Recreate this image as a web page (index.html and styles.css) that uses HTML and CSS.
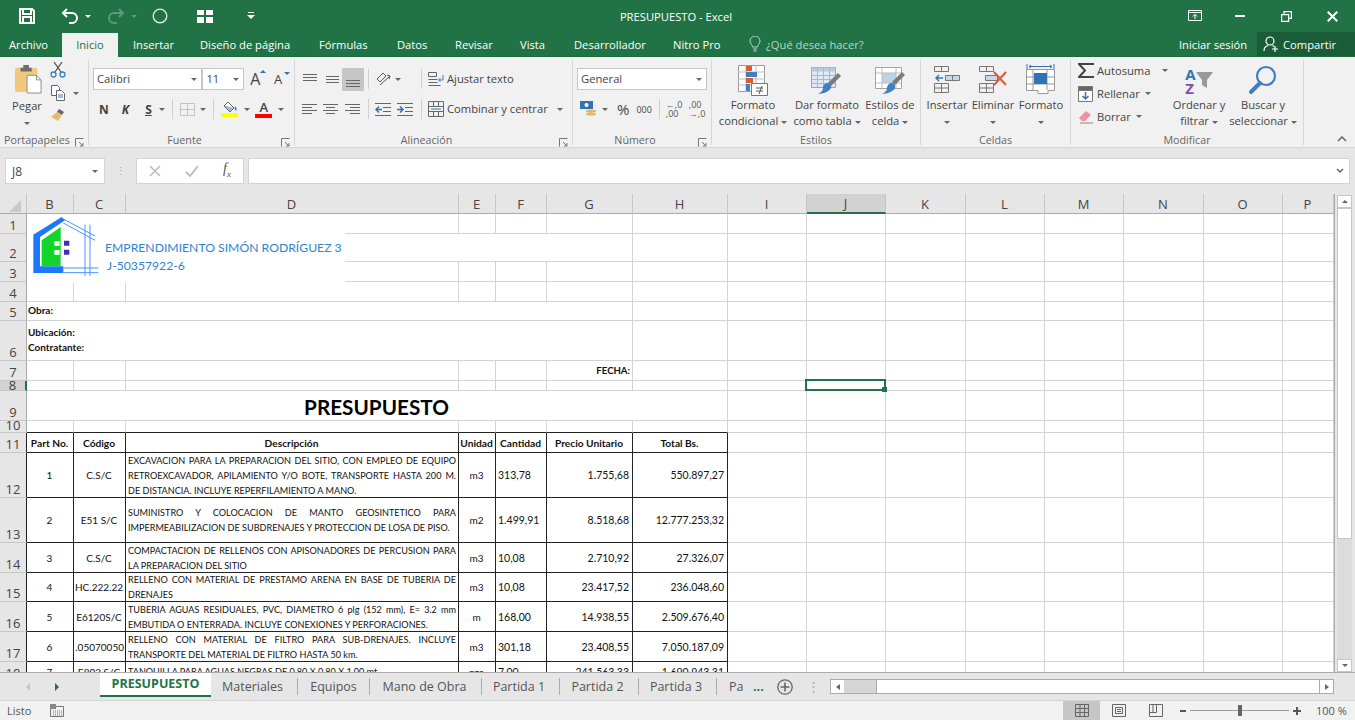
FILE: index.html
```html
<!DOCTYPE html>
<html lang="es">
<head>
    <meta charset="UTF-8">
    <title>PRESUPUESTO - Excel</title>
    <link rel="stylesheet" href="styles.css">
</head>
<body>
    <!-- title bar -->
    <div class="titlebar">
        <div class="qat">
            <svg class="q-save" width="18" height="18" viewBox="0 0 18 18" fill="none" stroke="#fff" stroke-width="2"><path d="M2 2h12l2 2v12H2z"/><path d="M5 2v5h8V2M5 16v-6h8v6"/></svg>
            <svg class="q-undo" width="18" height="16" viewBox="0 0 18 16" fill="none" stroke="#fff" stroke-width="2"><path d="M6 1L2 5l4 4M2 5h9a4.500 4.500 0 0 1 0 10H8"/></svg>
            <span class="caret white q-c1"></span>
            <svg class="q-redo" width="18" height="16" viewBox="0 0 18 16" fill="none" stroke="#5c9a7c" stroke-width="2"><path d="M12 1l4 4-4 4M16 5H7a4.500 4.500 0 0 0 0 10h3"/></svg>
            <span class="caret dim q-c2"></span>
            <svg class="q-circle" width="16" height="16" viewBox="0 0 16 16" fill="none" stroke="#dfeee6" stroke-width="1.300"><circle cx="8" cy="8" r="6.800"/></svg>
            <svg class="q-form" width="16" height="13" viewBox="0 0 16 13" fill="#fff"><path d="M0 0h7v5H0zM9 0h7v5H9zM0 7h7v6H0zM9 7h7v6H9z"/></svg>
            <svg class="q-more" width="8" height="8" viewBox="0 0 8 8" fill="#fff"><path d="M1 0h6v1H1zM0 3h8L4 7z"/></svg>
        </div>
        <div class="doc-title">PRESUPUESTO - Excel</div>
        <div class="win-btns">
            <svg width="14" height="12" viewBox="0 0 14 12" fill="none" stroke="#fff"><path d="M.5.500h13v10H.5zM.5 2.500h13"/><path d="M7 9V4.500M4.800 6.500L7 4.300l2.200 2.200"/></svg>
            <svg class="w-min" width="10" height="2" viewBox="0 0 10 2" fill="#fff"><path d="M0 0h10v2H0z"/></svg>
            <svg class="w-max" width="11" height="11" viewBox="0 0 11 11" fill="none" stroke="#fff" stroke-width="1.200"><path d="M.6 3.600h7v6.800h-7zM3 3.500V.6h7.400v6.800H7.700"/></svg>
            <svg class="w-close" width="11" height="11" viewBox="0 0 11 11" stroke="#fff" stroke-width="2"><path d="M.7.700l9.600 9.600M10.300.7L.7 10.300"/></svg>
        </div>
    </div>

    <!-- ribbon tabs -->
    <div class="tabrow">
        <span class="rtab t-archivo">Archivo</span>
        <span class="rtab active t-inicio">Inicio</span>
        <span class="rtab t-insertar">Insertar</span>
        <span class="rtab t-diseno">Diseño de página</span>
        <span class="rtab t-formulas">Fórmulas</span>
        <span class="rtab t-datos">Datos</span>
        <span class="rtab t-revisar">Revisar</span>
        <span class="rtab t-vista">Vista</span>
        <span class="rtab t-desa">Desarrollador</span>
        <span class="rtab t-nitro">Nitro Pro</span>
        <svg class="bulb" width="12" height="16" viewBox="0 0 12 16" fill="none" stroke="#b9d5c6"><path d="M3.500 11C3.500 8.500 1 8 1 5a5 5 0 0 1 10 0c0 3-2.500 3.500-2.500 6zM4 13h4M4.500 15h3"/></svg>
        <span class="rtab t-search">¿Qué desea hacer?</span>
        <span class="rtab t-login">Iniciar sesión</span>
        <span class="share">
            <svg width="16" height="16" viewBox="0 0 16 16" fill="none" stroke="#fff" stroke-width="1.200"><circle cx="7" cy="5" r="4"/><path d="M1 15c0-3 2-5 4-5.500M9.500 9.500l1.500 1M9 13h6M12 10v6"/></svg>
            Compartir
        </span>
    </div>

    <!-- ribbon -->
    <div class="ribbon">
        <div class="group g-porta">
            <div class="gbody">
                <div class="paste">
                    <svg width="28" height="30" viewBox="0 0 30 30"><rect x="1" y="3" width="24" height="26" rx="2" fill="#f0c97c"/><path d="M7 3h3V0h6v3h3v4H7z" fill="#6d6d6d"/><path d="M14 11h10l5 5v14H14z" fill="#fff" stroke="#8a8a8a"/><path d="M24 11v5h5" fill="none" stroke="#8a8a8a"/></svg>
                    <div class="btn-text">Pegar</div>
                    <span class="caret"></span>
                </div>
                <div class="clip-tools">
                    <svg width="16" height="16" viewBox="0 0 16 16" fill="none"><path d="M4 0l7 10M12 0L5 10" stroke="#555" stroke-width="1.300"/><circle cx="3.500" cy="12.500" r="2.500" stroke="#3d7fc1" stroke-width="1.300"/><circle cx="12.500" cy="12.500" r="2.500" stroke="#3d7fc1" stroke-width="1.300"/></svg>
                    <div class="copy-row">
                        <svg width="16" height="16" viewBox="0 0 16 16" fill="#fff" stroke="#666"><path d="M1.500.5h6l2 2v8h-8z"/><path d="M6.500 5.500h5l3 3v7h-8z"/><path d="M8 10h5M8 12h5" stroke="#3d7fc1"/></svg>
                        <span class="caret"></span>
                    </div>
                    <svg width="16" height="14" viewBox="0 0 16 14"><path d="M9 1l5 3-2 3-5-3z" fill="#666"/><path d="M7 4l5 3-4 6-7-4z" fill="#e7bb6d"/></svg>
                </div>
            </div>
            <div class="glabel">Portapapeles<svg class="launch" width="9" height="9" viewBox="0 0 9 9" fill="none" stroke="#777"><path d="M.5 8.500v-8h8M4 4l4 4M8 5v3H5"/></svg></div>
        </div>

        <div class="group g-fuente">
            <div class="gbody col">
                <div class="row">
                    <div class="select s-font">Calibri<span class="caret"></span></div>
                    <div class="select s-size">11<span class="caret"></span></div>
                    <span class="grow-a">A<i class="up"></i></span>
                    <span class="grow-a small">A<i class="down"></i></span>
                </div>
                <div class="row r-font2">
                    <b class="fmt f-n">N</b>
                    <b class="fmt f-k">K</b>
                    <b class="fmt f-s">S</b>
                    <span class="caret"></span>
                    <i class="vsep"></i>
                    <svg width="15" height="13" viewBox="0 0 15 13" fill="none" stroke="#999" stroke-dasharray="1 1"><path d="M.5.500h14v12H.5zM.5 6.500h14M7.500.5v12"/></svg>
                    <span class="caret"></span>
                    <i class="vsep"></i>
                    <span class="colored">
                        <svg width="16" height="12" viewBox="0 0 16 12"><path d="M6 1l6 6-4 4-6-6z" fill="#fff" stroke="#666"/><path d="M13 5c2 2 2 4 1 5-1-1-2-3-1-5z" fill="#3d7fc1"/><path d="M5 5l7 2-4 4-6-6z" fill="#3d7fc1" opacity=".5"/></svg>
                        <i class="bar yellow"></i>
                    </span>
                    <span class="caret"></span>
                    <span class="colored c-a">
                        <span class="a-letter">A</span>
                        <i class="bar red"></i>
                    </span>
                    <span class="caret"></span>
                </div>
            </div>
            <div class="glabel">Fuente<svg class="launch" width="9" height="9" viewBox="0 0 9 9" fill="none" stroke="#777"><path d="M.5 8.500v-8h8M4 4l4 4M8 5v3H5"/></svg></div>
        </div>

        <div class="group g-alin">
            <div class="gbody col">
                <div class="row">
                    <svg class="al" width="16" height="10" viewBox="0 0 16 10" stroke="#666"><path d="M1 .5h14M1 3.500h14M1 6.500h14"/></svg>
                    <svg class="al a-mid" width="16" height="10" viewBox="0 0 16 10" stroke="#666"><path d="M2 2.500h13M2 5.500h13M2 8.500h13"/></svg>
                    <span class="al-on"><svg width="14" height="10" viewBox="0 0 14 10" stroke="#666"><path d="M0 3.500h14M0 6.500h14M0 9.500h14"/></svg></span>
                    <i class="vsep tall"></i>
                    <svg width="16" height="16" viewBox="0 0 16 16" fill="none" stroke="#555"><path d="M1 8l6-6 3 3-6 6zM4 14L14 5M11 4l3 1-1 3"/></svg>
                    <span class="caret"></span>
                    <i class="vsep tall s2"></i>
                    <svg width="16" height="16" viewBox="0 0 16 16" fill="none" stroke="#666"><path d="M.5 1.500h8v4h-8zM.5 8.500h9M.5 11.500h9M.5 14.500h12"/><path d="M15 4v5h-4M12.500 7L10.500 9l2 2" stroke="#3d7fc1"/></svg>
                    <span class="btn-text side">Ajustar texto</span>
                </div>
                <div class="row">
                    <svg class="al a1" width="15" height="13" viewBox="0 0 15 13" stroke="#666"><path d="M0 1.500h15M0 4.500h10M0 7.500h15M0 10.500h10"/></svg>
                    <svg class="al a2" width="15" height="13" viewBox="0 0 15 13" stroke="#666"><path d="M0 1.500h15M3 4.500h9M0 7.500h15M3 10.500h9"/></svg>
                    <svg class="al a3" width="15" height="13" viewBox="0 0 15 13" stroke="#666"><path d="M0 1.500h15M5 4.500h10M0 7.500h15M5 10.500h10"/></svg>
                    <i class="vsep tall s3"></i>
                    <svg width="16" height="13" viewBox="0 0 16 13" fill="none" stroke="#666"><path d="M0 .5h16M8 4.500h8M8 8.500h8M0 12.500h16"/><path d="M7 6.500H1M4 3.500l-3 3 3 3" stroke="#2f75b5" stroke-width="1.500"/></svg>
                    <svg class="ind2" width="16" height="13" viewBox="0 0 16 13" fill="none" stroke="#666"><path d="M0 .5h16M8 4.500h8M8 8.500h8M0 12.500h16"/><path d="M0 6.500h6M3 3.500l3 3-3 3" stroke="#2f75b5" stroke-width="1.500"/></svg>
                    <i class="vsep tall s4"></i>
                    <svg width="16" height="16" viewBox="0 0 16 16" fill="none" stroke="#666"><path d="M.5.500h15v15H.5zM.5 5.500h15M.5 10.500h15M5.500.5v5M10.500.5v5M5.500 10.500v5M10.500 10.500v5"/><path d="M3 8h10" stroke="#2f75b5"/></svg>
                    <span class="btn-text side">Combinar y centrar</span>
                    <span class="caret c-merge"></span>
                </div>
            </div>
            <div class="glabel">Alineación<svg class="launch" width="9" height="9" viewBox="0 0 9 9" fill="none" stroke="#777"><path d="M.5 8.500v-8h8M4 4l4 4M8 5v3H5"/></svg></div>
        </div>

        <div class="group g-num">
            <div class="gbody col">
                <div class="row">
                    <div class="select s-num">General<span class="caret"></span></div>
                </div>
                <div class="row r-num2">
                    <svg width="17" height="16" viewBox="0 0 17 16"><path d="M0 0h13v8H0z" fill="#2f75b5"/><circle cx="6.500" cy="4" r="2" fill="#fff"/><ellipse cx="11" cy="10" rx="5" ry="1.500" fill="#e8b45c"/><ellipse cx="11" cy="13" rx="5" ry="1.500" fill="#e8b45c"/></svg>
                    <span class="caret"></span>
                    <span class="pct">%</span>
                    <span class="thou">000</span>
                    <i class="vsep s5"></i>
                    <span class="dec"><i><u>←</u>,0</i><i>,00</i></span>
                    <span class="dec d2"><i>,00</i><i><u>→</u>,0</i></span>
                </div>
            </div>
            <div class="glabel">Número<svg class="launch" width="9" height="9" viewBox="0 0 9 9" fill="none" stroke="#777"><path d="M.5 8.500v-8h8M4 4l4 4M8 5v3H5"/></svg></div>
        </div>

        <div class="group g-est">
            <div class="gbody">
                <div class="big b-cond">
                    <svg width="32" height="33" viewBox="0 0 32 33"><path d="M1.500 1.500h26v26h-26z" fill="#fff" stroke="#9a9a9a"/><path d="M9 1v27M19 1v27M1 8h27M1 15h27M1 21h27" stroke="#bdbdbd"/><path d="M9 2h6v5H9zM9 14h7v5H9z" fill="#dc5b33"/><path d="M9 8h11v5H9zM9 20h4v7H9z" fill="#3f80c0"/><path d="M14.500 19.500h16v12h-16z" fill="#fff" stroke="#777"/><path d="M19 24h7M19 27h7M25 22l-3 8" stroke="#555" fill="none"/></svg>
                    <div class="btn-text">Formato<br>condicional <span class="caret"></span></div>
                </div>
                <div class="big b-tabla">
                    <svg width="32" height="33" viewBox="0 0 32 33"><path d="M.5 3.500h24v20H.5z" fill="#dfe8f4" stroke="#a3a3a3"/><path d="M.5 3.500h24v4H.5z" fill="#b9c9df"/><path d="M6.500 4v19M12.500 4v19M18.500 4v19M1 11.500h23M1 15.500h23M1 19.500h23" stroke="#b5b5b5"/><path d="M27 9l3 3-10 10-3-3z" fill="#7b7b7b"/><path d="M16 19c3 0 5 2 4 5s-8 6-13 6c4-2 5-4 5-6s2-5 4-5z" fill="#3f80c0"/></svg>
                    <div class="btn-text">Dar formato<br>como tabla <span class="caret"></span></div>
                </div>
                <div class="big b-est">
                    <svg width="30" height="33" viewBox="0 0 30 33"><path d="M.5 3.500h26v21H.5z" fill="#fff" stroke="#a3a3a3"/><path d="M7 9h14v10H7z" fill="#bcd2ea"/><path d="M7 4v20M21 4v20M1 9h25M1 19h25" stroke="#bdbdbd"/><path d="M27 8l3 3-10 10-3-3z" fill="#7b7b7b"/><path d="M16 19c3 0 5 2 4 5s-8 6-13 6c4-2 5-4 5-6s2-5 4-5z" fill="#3f80c0"/></svg>
                    <div class="btn-text">Estilos de<br>celda <span class="caret"></span></div>
                </div>
            </div>
            <div class="glabel plain">Estilos</div>
        </div>

        <div class="group g-cel">
            <div class="gbody">
                <div class="big b-ins">
                    <svg width="28" height="33" viewBox="0 0 28 33" fill="none" stroke="#777"><path d="M1.500 2.500h14v5h-14zM8.500 2.500v5M1.500 19.500h14v9h-14zM1.500 24h14M8.500 19.500v9"/><path d="M12.500 11.500h14v5h-14zM19.500 11.500v5" fill="#c5d8ec"/><path d="M10 14H3M6 11l-3 3 3 3" stroke="#2f75b5" stroke-width="1.500"/></svg>
                    <div class="btn-text">Insertar<br><span class="caret"></span></div>
                </div>
                <div class="big b-eli">
                    <svg width="30" height="33" viewBox="0 0 30 33" fill="none" stroke="#777"><path d="M1.500 2.500h14v5h-14zM8.500 2.500v5M1.500 19.500h14v9h-14zM1.500 24h14M8.500 19.500v9"/><path d="M7.500 11.500h12v5h-12z" fill="#c5d8ec"/><path d="M16 8l12 13M28 8L16 21" stroke="#dc5b33" stroke-width="2"/></svg>
                    <div class="btn-text">Eliminar<br><span class="caret"></span></div>
                </div>
                <div class="big b-for">
                    <svg width="30" height="33" viewBox="0 0 30 33" fill="none" stroke="#999"><path d="M.5 5.500h28v21H22v3H12v-3H.5z" fill="#fff"/><path d="M7 6v20M21 6v20M1 13h27M1 20h27"/><path d="M8 9h13v11H8z" fill="#2f75b5" stroke="none"/><path d="M1 0v5M28 0v5M3 2.500h23M5 1L3 2.500 5 4M24 1l2 1.500L24 4" stroke="#2f75b5"/></svg>
                    <div class="btn-text">Formato<br><span class="caret"></span></div>
                </div>
            </div>
            <div class="glabel plain">Celdas</div>
        </div>

        <div class="group g-mod">
            <div class="gbody">
                <div class="edit-col">
                    <div class="edit-row">
                        <svg width="16" height="15" viewBox="0 0 16 15" fill="none" stroke="#444" stroke-width="2"><path d="M15 2V1H1l6 6.500L1 14h14v-1"/></svg>
                        <span class="btn-text side">Autosuma</span>
                        <span class="caret c-auto"></span>
                    </div>
                    <div class="edit-row">
                        <svg width="15" height="16" viewBox="0 0 15 16" fill="#fff" stroke="#777"><path d="M.5.500h14v15H.5z"/><path d="M.5.500h14v4H.5z" fill="#666"/><path d="M7.500 6v7M4.500 10l3 3 3-3" fill="none" stroke="#2f75b5" stroke-width="1.500"/></svg>
                        <span class="btn-text side s-fill">Rellenar</span>
                        <span class="caret"></span>
                    </div>
                    <div class="edit-row">
                        <svg width="15" height="14" viewBox="0 0 15 14"><path d="M8 1l5 4-6 6H4L1 8z" fill="#f0919f"/><path d="M2 13h13" stroke="#888"/></svg>
                        <span class="btn-text side s-fill">Borrar</span>
                        <span class="caret"></span>
                    </div>
                </div>
                <div class="big b-ord">
                    <span class="sort-ic">
                        <span class="az"><i class="az-a">A</i><i class="az-z">Z</i></span>
                        <svg width="17" height="17" viewBox="0 0 17 17" fill="#999"><path d="M0 0h17l-6 8v8l-5-3V8z"/></svg>
                    </span>
                    <div class="btn-text">Ordenar y<br>filtrar <span class="caret"></span></div>
                </div>
                <div class="big b-bus">
                    <svg width="30" height="33" viewBox="0 0 30 33" fill="none"><circle cx="18" cy="12" r="9" stroke="#3f80c0" stroke-width="2.200"/><path d="M12 19L3 28" stroke="#3f80c0" stroke-width="4" stroke-linecap="round"/></svg>
                    <div class="btn-text">Buscar y<br>seleccionar <span class="caret"></span></div>
                </div>
            </div>
            <div class="glabel plain">Modificar</div>
        </div>

        <svg class="collapse" width="10" height="6" viewBox="0 0 10 6" fill="none" stroke="#666" stroke-width="1.500"><path d="M1 5l4-4 4 4"/></svg>
    </div>

    <!-- formula bar -->
    <div class="formulabar">
        <div class="namebox">J8<span class="caret"></span></div>
        <span class="dots">⋮</span>
        <div class="fx-btns">
            <svg width="12" height="12" viewBox="0 0 12 12" stroke="#bbb" stroke-width="1.500"><path d="M1 1l10 10M11 1L1 11"/></svg>
            <svg width="14" height="12" viewBox="0 0 14 12" fill="none" stroke="#bbb" stroke-width="1.800"><path d="M1 7l4 4 8-10"/></svg>
            <span class="fx">f<sub>x</sub></span>
        </div>
        <div class="fx-input"><svg width="8" height="6" viewBox="0 0 8 6" fill="none" stroke="#666" stroke-width="1.500"><path d="M1 1l3 3 3-3"/></svg></div>
    </div>

    <!-- sheet -->
    <div class="sheet">
        <div class="gridwrap">
            <table class="grid">
                <colgroup>
                    <col class="c-rh"><col class="c-b"><col class="c-c"><col class="c-d"><col class="c-e"><col class="c-f"><col class="c-g"><col class="c-h">
                    <col class="c-std"><col class="c-std"><col class="c-w"><col class="c-std"><col class="c-std"><col class="c-w"><col class="c-std"><col class="c-p">
                </colgroup>
                <tr class="h20">
                    <th class="corner"><i></i></th>
                    <th class="ch">B</th><th class="ch">C</th><th class="ch">D</th><th class="ch">E</th><th class="ch">F</th><th class="ch">G</th><th class="ch">H</th><th class="ch">I</th>
                    <th class="ch sel">J</th><th class="ch">K</th><th class="ch">L</th><th class="ch">M</th><th class="ch">N</th><th class="ch">O</th><th class="ch">P</th>
                </tr>
                <tr class="h20"><th class="rh"><div class="n">1</div></th><td></td><td></td><td></td><td></td><td></td><td></td><td></td><td></td><td></td><td></td><td></td><td></td><td></td><td></td><td></td></tr>
                <tr class="h28"><th class="rh"><div class="n">2</div></th><td colspan="6"></td><td></td><td></td><td></td><td></td><td></td><td></td><td></td><td></td><td></td></tr>
                <tr class="h20"><th class="rh"><div class="n">3</div></th><td></td><td></td><td></td><td></td><td></td><td></td><td></td><td></td><td></td><td></td><td></td><td></td><td></td><td></td><td></td></tr>
                <tr class="h20"><th class="rh"><div class="n">4</div></th><td></td><td></td><td></td><td></td><td></td><td></td><td></td><td></td><td></td><td></td><td></td><td></td><td></td><td></td><td></td></tr>
                <tr class="h19"><th class="rh"><div class="n">5</div></th><td colspan="6" class="lbl">Obra:</td><td></td><td></td><td></td><td></td><td></td><td></td><td></td><td></td><td></td></tr>
                <tr class="h40"><th class="rh"><div class="n">6</div></th><td colspan="6" class="lbl">Ubicación:<br>Contratante:</td><td></td><td></td><td></td><td></td><td></td><td></td><td></td><td></td><td></td></tr>
                <tr class="h20"><th class="rh"><div class="n">7</div></th><td></td><td></td><td></td><td></td><td></td><td class="lbl right">FECHA:</td><td></td><td></td><td></td><td></td><td></td><td></td><td></td><td></td><td></td></tr>
                <tr class="h10"><th class="rh sel"><div class="n">8</div></th><td></td><td></td><td></td><td></td><td></td><td></td><td></td><td></td><td class="active-cell"><span class="cursor"><i></i></span></td><td></td><td></td><td></td><td></td><td></td><td></td></tr>
                <tr class="h30"><th class="rh"><div class="n">9</div></th><td colspan="7" class="main-title">PRESUPUESTO</td><td></td><td></td><td></td><td></td><td></td><td></td><td></td><td></td></tr>
                <tr class="h12"><th class="rh"><div class="n">10</div></th><td class="bb"></td><td class="bb"></td><td class="bb"></td><td class="bb"></td><td class="bb"></td><td class="bb"></td><td class="bb"></td><td></td><td></td><td></td><td></td><td></td><td></td><td></td><td></td></tr>
                <tr class="h20 head"><th class="rh rd"><div class="n">11</div></th><td class="bx">Part No.</td><td class="bx">Código</td><td class="bx">Descripción</td><td class="bx">Unidad</td><td class="bx">Cantidad</td><td class="bx">Precio Unitario</td><td class="bx">Total Bs.</td><td></td><td></td><td></td><td></td><td></td><td></td><td></td><td></td></tr>
                <tr class="h45"><th class="rh rd"><div class="n">12</div></th><td class="bx ctr">1</td><td class="bx ctr">C.S/C</td><td class="bx desc"><div class="jl">EXCAVACION PARA LA PREPARACION DEL SITIO, CON EMPLEO DE EQUIPO</div><div class="jl">RETROEXCAVADOR, APILAMIENTO Y/O BOTE, TRANSPORTE HASTA 200 M.</div><div>DE DISTANCIA. INCLUYE REPERFILAMIENTO A MANO.</div></td><td class="bx ctr">m3</td><td class="bx qty">313,78</td><td class="bx num">1.755,68</td><td class="bx num">550.897,27</td><td></td><td></td><td></td><td></td><td></td><td></td><td></td><td></td></tr>
                <tr class="h45"><th class="rh rd"><div class="n">13</div></th><td class="bx ctr">2</td><td class="bx ctr">E51 S/C</td><td class="bx desc"><div class="jl">SUMINISTRO Y COLOCACION DE MANTO GEOSINTETICO PARA</div><div>IMPERMEABILIZACION DE SUBDRENAJES Y PROTECCION DE LOSA DE PISO.</div></td><td class="bx ctr">m2</td><td class="bx qty">1.499,91</td><td class="bx num">8.518,68</td><td class="bx num">12.777.253,32</td><td></td><td></td><td></td><td></td><td></td><td></td><td></td><td></td></tr>
                <tr class="h30"><th class="rh rd"><div class="n">14</div></th><td class="bx ctr">3</td><td class="bx ctr">C.S/C</td><td class="bx desc"><div class="jl">COMPACTACION DE RELLENOS CON APISONADORES DE PERCUSION PARA</div><div>LA PREPARACION DEL SITIO</div></td><td class="bx ctr">m3</td><td class="bx qty">10,08</td><td class="bx num">2.710,92</td><td class="bx num">27.326,07</td><td></td><td></td><td></td><td></td><td></td><td></td><td></td><td></td></tr>
                <tr class="h29"><th class="rh rd"><div class="n">15</div></th><td class="bx ctr">4</td><td class="bx ctr">HC.222.22</td><td class="bx desc"><div class="jl">RELLENO CON MATERIAL DE PRESTAMO ARENA EN BASE DE TUBERIA DE</div><div>DRENAJES</div></td><td class="bx ctr">m3</td><td class="bx qty">10,08</td><td class="bx num">23.417,52</td><td class="bx num">236.048,60</td><td></td><td></td><td></td><td></td><td></td><td></td><td></td><td></td></tr>
                <tr class="h30"><th class="rh rd"><div class="n">16</div></th><td class="bx ctr">5</td><td class="bx ctr">E6120S/C</td><td class="bx desc"><div class="jl">TUBERIA AGUAS RESIDUALES, PVC, DIAMETRO 6 plg (152 mm), E= 3.2 mm</div><div>EMBUTIDA O ENTERRADA. INCLUYE CONEXIONES Y PERFORACIONES.</div></td><td class="bx ctr">m</td><td class="bx qty">168,00</td><td class="bx num">14.938,55</td><td class="bx num">2.509.676,40</td><td></td><td></td><td></td><td></td><td></td><td></td><td></td><td></td></tr>
                <tr class="h30"><th class="rh rd"><div class="n">17</div></th><td class="bx ctr">6</td><td class="bx ctr code-end">.05070050</td><td class="bx desc"><div class="jl">RELLENO CON MATERIAL DE FILTRO PARA SUB-DRENAJES. INCLUYE</div><div>TRANSPORTE DEL MATERIAL DE FILTRO HASTA 50 km.</div></td><td class="bx ctr">m3</td><td class="bx qty">301,18</td><td class="bx num">23.408,55</td><td class="bx num">7.050.187,09</td><td></td><td></td><td></td><td></td><td></td><td></td><td></td><td></td></tr>
                <tr class="h20"><th class="rh rd"><div class="n">18</div></th><td class="bx ctr">7</td><td class="bx ctr">E802 S/C</td><td class="bx desc"><div>TANQUILLA PARA AGUAS NEGRAS DE 0,80 X 0,80 X 1,00 mt</div></td><td class="bx ctr">pza</td><td class="bx qty">7,00</td><td class="bx num">241.563,33</td><td class="bx num">1.690.943,31</td><td></td><td></td><td></td><td></td><td></td><td></td><td></td><td></td></tr>
            </table>

            <!-- logo picture floating over the cells -->
            <div class="logo">
                <svg width="84" height="69" viewBox="18 6 252 207" fill="none">
                    <path d="M40 68L125 15l10 10-75 50v88h70v20H40z" fill="#1e78ff"/>
                    <path d="M65 85l57-40v118H65z" fill="#12d42a"/>
                    <path d="M103 87h16v15h-16zM103 114h16v15h-16z" fill="#e5f7e5"/>
                    <path d="M132 86h16v15h-16zM132 113h16v15h-16z" fill="#3a2fb5"/>
                    <path d="M125 18l100 54M130 33l95 52M195 38v154M210 38v154M130 168h105M130 182h105" stroke="#4d94ff" stroke-width="3"/>
                </svg>
                <div class="logo-text">
                    <div>EMPRENDIMIENTO SIMÓN RODRÍGUEZ 3</div>
                    <div class="rif">J-50357922-6</div>
                </div>
            </div>
        </div>
        <div class="vscroll">
            <span class="sb-btn"><i class="tri-up"></i></span>
            <span class="sb-thumb"></span>
            <span class="sb-track"></span>
            <span class="sb-btn"><i class="tri-down"></i></span>
        </div>
    </div>

    <!-- sheet tabs -->
    <div class="sheetbar">
        <span class="nav-arrow left"></span>
        <span class="nav-arrow right"></span>
        <span class="stab current">PRESUPUESTO</span>
        <span class="stab s-mat">Materiales</span>
        <span class="stab s-equ">Equipos</span>
        <span class="stab s-man">Mano de Obra</span>
        <span class="stab s-p1">Partida 1</span>
        <span class="stab s-p2">Partida 2</span>
        <span class="stab s-p3">Partida 3</span>
        <span class="stab s-pa">Pa</span>
        <b class="more">...</b>
        <svg class="add" width="16" height="16" viewBox="0 0 16 16" fill="none" stroke="#666" stroke-width="1.300"><circle cx="8" cy="8" r="7.200"/><path d="M8 3.500v9M3.500 8h9" stroke-width="1.600"/></svg>
        <span class="dots d-sheet">⋮</span>
        <div class="hscroll">
            <span class="hs-btn"><i class="tri-left"></i></span>
            <span class="hs-track"></span>
            <span class="hs-thumb"></span>
            <span class="hs-btn"><i class="tri-right"></i></span>
        </div>
    </div>

    <!-- status bar -->
    <div class="statusbar">
        <span class="listo">Listo</span>
        <svg class="macro" width="14" height="13" viewBox="0 0 14 13" fill="none" stroke="#777"><path d="M.5 2.500h13v10H.5z"/><path d="M0 0h6v5H0z" fill="#888" stroke="none"/><path d="M3 7h9M3 9h9M3 11h9" stroke-dasharray="1 1"/></svg>
        <span class="view on"><svg width="14" height="13" viewBox="0 0 14 13" fill="none" stroke="#666"><path d="M.5.500h13v12H.5zM.5 4.500h13M.5 8.500h13M5 .5v12M9.500.5v12"/></svg></span>
        <span class="view"><svg width="14" height="13" viewBox="0 0 14 13" fill="none" stroke="#666"><path d="M.5.500h13v12H.5zM3.500 3.500h7v6h-7zM5 5.500h4M5 7.500h4"/></svg></span>
        <span class="view"><svg width="14" height="13" viewBox="0 0 14 13" fill="none" stroke="#666"><path d="M.5.500h13v12H.5zM.5 8.500h7V.5M7.500 4.500"/><path d="M4 .5v8"/></svg></span>
        <span class="zoom-minus"></span>
        <span class="slider"><i></i></span>
        <span class="zoom-plus"></span>
        <span class="zoom-val">100 %</span>
    </div>
</body>
</html>
```

FILE: styles.css
```css
* {
    box-sizing: border-box;
}
body {
    margin: 0;
    width: 1355px;
    height: 720px;
    overflow: hidden;
    background-color: #e6e6e6;
    font-family: 'Open Sans', sans-serif;
    font-size: 11.200px;
    color: #444;
    display: flex;
    flex-direction: column;
}
i {
    font-style: normal;
}
.caret {
    display: inline-block;
    width: 0;
    height: 0;
    border-left: 3px solid transparent;
    border-right: 3px solid transparent;
    border-top: 3px solid #666;
    vertical-align: middle;
}
.caret.white {
    border-top-color: #fff;
}
.caret.dim {
    border-top-color: #5c9a7c;
}

/* title bar */
.titlebar {
    height: 32px;
    background-color: #217346;
    color: #fff;
    display: flex;
    align-items: center;
    flex-shrink: 0;
}
.qat {
    width: 536px;
    display: flex;
    align-items: center;
}
.q-save { margin-left: 18px; }
.q-undo { margin-left: 25px; }
.q-c1 { margin-left: 6px; }
.q-redo { margin-left: 16px; }
.q-c2 { margin-left: 6px; }
.q-circle { margin-left: 15px; }
.q-form { margin-left: 29px; }
.q-more { margin-left: 34px; }
.doc-title {
    width: 280px;
    text-align: center;
}
.win-btns {
    flex: 1;
    display: flex;
    align-items: center;
    padding-left: 372px;
}
.w-min { margin-left: 33px; }
.w-max { margin-left: 36px; }
.w-close { margin-left: 35px; }

/* ribbon tabs */
.tabrow {
    height: 25px;
    background-color: #217346;
    color: #fff;
    display: flex;
    align-items: flex-start;
    flex-shrink: 0;
    border-bottom: 1px solid #1d6b40;
}
.rtab {
    line-height: 25px;
    white-space: nowrap;
}
.rtab.active {
    height: 25px;
    background-color: #f1f1f1;
    color: #217346;
    text-align: center;
}
.t-archivo { margin-left: 9px; width: 53px; }
.t-inicio { width: 56px; margin-top: 1px; line-height: 24px; }
.t-insertar { margin-left: 15px; width: 67px; }
.t-diseno { width: 119px; }
.t-formulas { width: 78px; }
.t-datos { width: 58px; }
.t-revisar { width: 65px; }
.t-vista { width: 54px; }
.t-desa { width: 99px; }
.t-nitro { width: 76px; }
.bulb { margin-top: 4px; }
.t-search { margin-left: 5px; width: 413px; color: #b9d5c6; }
.t-login { width: 78px; }
.share {
    width: 98px;
    height: 24px;
    background-color: #1a5c38;
    display: flex;
    align-items: center;
    gap: 4px;
    padding-left: 6px;
    white-space: nowrap;
}

/* ribbon */
.ribbon {
    height: 91px;
    background-color: #f1f1f1;
    border-bottom: 1px solid #d4d4d4;
    padding-top: 3px;
    display: flex;
    align-items: flex-start;
    flex-shrink: 0;
}
.group {
    height: 85px;
    padding-top: 8px;
    border-right: 1px solid #d6d6d6;
    display: flex;
    flex-direction: column;
}
.g-porta { width: 89px; }
.g-fuente { width: 206px; }
.g-alin { width: 278px; }
.g-num { width: 139px; }
.g-est { width: 209px; }
.g-cel { width: 150px; }
.g-mod { width: 233px; }
.gbody {
    height: 62px;
    display: flex;
}
.gbody.col {
    flex-direction: column;
    gap: 8px;
}
.row {
    height: 22px;
    display: flex;
    align-items: center;
}
.glabel {
    height: 15px;
    line-height: 20px;
    font-size: 10.700px;
    color: #666;
    display: flex;
    justify-content: center;
    padding-right: 14px;
    position: relative;
}
.glabel.plain {
    padding-right: 0;
}
.launch {
    position: absolute;
    right: 4px;
    top: 8px;
}
.btn-text {
    line-height: 16px;
    text-align: center;
    white-space: nowrap;
}
.btn-text.side {
    margin-left: 3px;
}
.vsep {
    width: 1px;
    height: 20px;
    background-color: #d0d0d0;
}
.paste {
    width: 42px;
    margin: -4px 0 0 6px;
    text-align: center;
    line-height: 0;
}
.paste svg { margin: 0 0 4px 2px; }
.paste .caret { margin-top: 8px; }
.clip-tools {
    margin: -6px 0 0 2px;
    display: flex;
    flex-direction: column;
    gap: 7px;
}
.copy-row {
    display: flex;
    align-items: center;
    gap: 7px;
}

/* font group */
.select {
    height: 22px;
    background-color: #fff;
    border: 1px solid #c6c6c6;
    line-height: 20px;
    padding-left: 3px;
    display: flex;
    justify-content: space-between;
    align-items: center;
}
.select .caret { margin-right: 4px; }
.s-font { width: 110px; margin-left: 4px; }
.s-size { width: 42px; }
.s-num { width: 130px; margin-left: 4px; }
.grow-a {
    font-size: 16px;
    margin-left: 6px;
    width: 20px;
    position: relative;
}
.grow-a.small {
    font-size: 13px;
    margin-left: 4px;
}
.grow-a i {
    position: absolute;
    top: 2px;
    left: 10px;
    border: 3px solid transparent;
    border-top: 0;
    border-bottom: 3px solid #2f75b5;
}
.grow-a i.down {
    border-bottom: 0;
    border-top: 3px solid #2f75b5;
}
.fmt {
    font-size: 12px;
}
.f-n { margin-left: 10px; }
.f-k { margin-left: 13px; font-style: italic; }
.f-s { margin-left: 16px; margin-right: 7px; text-decoration: underline; }
.r-font2 .vsep { margin: 0 7px 0 7px; }
.r-font2 svg { margin-right: 5px; }
.colored {
    width: 18px;
    display: flex;
    flex-direction: column;
    align-items: center;
    margin-right: 5px;
}
.colored svg { margin: 0; }
.c-a { margin-left: 5px; }
.a-letter {
    font-size: 13px;
    font-weight: 600;
    line-height: 13px;
}
.bar {
    width: 17px;
    height: 4px;
}
.bar.yellow { background-color: #ffff00; }
.bar.red { background-color: #ff0000; }

/* alignment group */
.al { flex-shrink: 0; }
.al.a-mid { margin-left: 6px; }
.g-alin .row > svg:first-child { margin-left: 7px; }
.al-on {
    width: 22px;
    height: 23px;
    margin-left: 2px;
    background-color: #c6c6c6;
    display: flex;
    align-items: flex-end;
    justify-content: center;
    padding-bottom: 4px;
}
.vsep.tall { margin: 0 7px 0 4px; }
.g-alin .row .caret { margin-left: 3px; }
.vsep.tall.s2 { margin: 0 6px 0 20px; }
.vsep.tall.s3 { margin: 0 6px 0 8px; }
.vsep.tall.s4 { margin: 0 6px 0 8px; }
.ind2 { margin-left: 6px; }
.al.a2 { margin-left: 6px; }
.al.a3 { margin-left: 7px; }
.g-alin .row .c-merge { margin-left: 9px; }

/* number group */
.r-num2 { padding-left: 7px; }
.r-num2 .caret { margin-left: 5px; }
.pct { font-size: 15px; margin-left: 9px; }
.thou { font-size: 9px; margin-left: 7px; }
.r-num2 .vsep { margin: 0 6px 0 7px; }
.dec {
    display: flex;
    flex-direction: column;
    font-size: 9px;
    line-height: 9px;
    width: 17px;
    color: #555;
    white-space: nowrap;
}
.dec u {
    color: #2f75b5;
    text-decoration: none;
}
.dec.d2 { margin-left: 6px; }

/* big buttons */
.big {
    margin-top: -4px;
    display: flex;
    flex-direction: column;
    align-items: center;
    flex-shrink: 0;
}
.big > svg {
    height: 33px;
}
.b-cond { width: 82px; }
.b-tabla { width: 66px; }
.b-est { width: 60px; }
.b-ins { width: 46px; margin-left: 3px; }
.b-eli { width: 46px; }
.b-for { width: 50px; }
.b-ord { width: 60px; }
.b-bus { width: 68px; }
.edit-col {
    width: 91px;
    margin: -7px 0 0 7px;
    display: flex;
    flex-direction: column;
    gap: 4px;
}
.edit-row {
    height: 19px;
    display: flex;
    align-items: center;
    gap: 2px;
}
.edit-row .btn-text.side { margin-left: 1px; }
.edit-row .btn-text.s-fill { margin-left: 2px; }
.edit-row .caret { margin-left: 3px; }
.edit-row .c-auto { margin-left: 10px; }
.sort-ic {
    height: 33px;
    display: flex;
    align-items: center;
}
.az {
    display: flex;
    flex-direction: column;
    font-size: 15px;
    font-weight: 700;
    line-height: 14px;
}
.az-a { color: #2f75b5; }
.az-z { color: #7a4fb5; }
.collapse {
    margin: 76px 0 0 33px;
}

/* formula bar */
.formulabar {
    height: 46px;
    padding: 10px 5px 10px 5px;
    display: flex;
    align-items: stretch;
    flex-shrink: 0;
}
.namebox, .fx-btns, .fx-input {
    background-color: #fff;
    border: 1px solid #d4d4d4;
}
.namebox {
    width: 100px;
    display: flex;
    align-items: center;
    justify-content: space-between;
    padding: 0 6px;
    font-size: 12px;
}
.dots {
    width: 31px;
    text-align: center;
    color: #aaa;
    line-height: 26px;
}
.fx-btns {
    width: 108px;
    display: flex;
    align-items: center;
    justify-content: space-around;
}
.fx {
    font-family: 'Liberation Serif', serif;
    font-style: italic;
    font-size: 14px;
    color: #555;
    line-height: 14px;
}
.fx sub { font-size: 9px; }
.fx-input {
    width: 1102px;
    margin-left: 4px;
    display: flex;
    align-items: center;
    justify-content: flex-end;
    padding-right: 5px;
}

/* sheet */
.sheet {
    height: 478px;
    display: flex;
    flex-shrink: 0;
}
.gridwrap {
    width: 1335px;
    position: relative;
    overflow: hidden;
    border-right: 1px solid #ababab;
    background-color: #fff;
}
.grid {
    table-layout: fixed;
    width: 1334px;
    border-collapse: separate;
    border-spacing: 0;
    font-family: Lato, sans-serif;
    color: #111;
    background-color: #fff;
}
.c-rh { width: 27px; }
.c-b { width: 47px; }
.c-c { width: 52px; }
.c-d { width: 333px; }
.c-e { width: 37px; }
.c-f { width: 51px; }
.c-g { width: 86px; }
.c-h { width: 95px; }
.c-std { width: 79px; }
.c-w { width: 80px; }
.c-p { width: 51px; }
.h10 { height: 10px; }
.h12 { height: 12px; }
.h19 { height: 19px; }
.h20 { height: 20px; }
.h28 { height: 28px; }
.h29 { height: 29px; }
.h30 { height: 30px; }
.h40 { height: 40px; }
.h45 { height: 45px; }
.grid th, .grid td {
    padding: 0;
}
.grid td {
    border-right: 1px solid #d4d4d4;
    border-bottom: 1px solid #d4d4d4;
}
.grid th {
    background-color: #e6e6e6;
    font-family: 'Open Sans', sans-serif;
    font-weight: 400;
    color: #444;
    font-size: 13px;
}
.corner {
    border-right: 1px solid #c6c6c6;
    border-bottom: 1px solid #ababab;
}
.corner i {
    display: block;
    width: 0;
    height: 0;
    margin: 4px 0 0 9px;
    border-left: 12px solid transparent;
    border-bottom: 12px solid #c8c8c8;
}
.grid th.ch {
    border-right: 1px solid #c6c6c6;
    border-bottom: 1px solid #ababab;
    line-height: 16px;
    padding-right: 1px;
}
.grid th.ch.sel {
    background-color: #d2d2d2;
    border-bottom: 2px solid #217346;
}
.rh {
    border-right: 1px solid #ababab;
    border-bottom: 1px solid #c6c6c6;
    vertical-align: bottom;
}
.rh.rd {
    border-right-color: #222;
}
.grid th.rh.sel {
    background-color: #d2d2d2;
    border-right: 2px solid #217346;
}
.n {
    line-height: 15px;
}
.h10 .n {
    height: 9px;
    line-height: 9px;
    overflow: hidden;
}
.h12 .n {
    height: 11px;
    line-height: 9px;
    overflow: hidden;
}
.grid td.lbl {
    font-size: 10px;
    font-weight: 700;
    line-height: 15px;
    padding: 0 0 2px 1px;
    vertical-align: middle;
}
.grid td.right {
    font-size: 9.600px;
    text-align: right;
    padding: 0 2px 0 0;
}
.grid td.main-title {
    font-size: 20.700px;
    font-weight: 700;
    text-align: center;
    color: #000;
    line-height: 22px;
    padding: 2px 1px 0 0;
}
.grid td.bb {
    border-bottom-color: #222;
}
.grid td.bx {
    border-right-color: #222;
    border-bottom-color: #222;
}
.grid .head td {
    font-size: 10.200px;
    font-weight: 700;
    text-align: center;
    white-space: nowrap;
    padding-right: 1px;
}
.grid td.ctr {
    font-size: 10px;
    text-align: center;
    white-space: nowrap;
    padding-right: 1px;
}
.grid td.code-end {
    text-align: right;
}
.grid td.desc {
    font-size: 9.100px;
    line-height: 15px;
    padding: 0 2px;
    white-space: nowrap;
}
.desc div:first-child {
    margin-top: -1px;
}
.desc div:last-child {
    margin-bottom: -1px;
}
.jl {
    text-align: justify;
    text-align-last: justify;
}
.grid td.qty {
    font-size: 10.500px;
    padding-left: 2px;
}
.grid td.num {
    font-size: 10.500px;
    text-align: right;
    padding-right: 3px;
}
.active-cell {
    position: relative;
}
.cursor {
    position: absolute;
    left: -2px;
    top: -2px;
    right: -1px;
    bottom: -1px;
    border: 2px solid #217346;
}
.cursor i {
    position: absolute;
    right: -3px;
    bottom: -3px;
    width: 5px;
    height: 5px;
    background-color: #217346;
}
.logo {
    position: absolute;
    left: 27px;
    top: 20px;
    width: 318px;
    height: 69px;
    background-color: #fff;
    display: flex;
    align-items: center;
    font-family: Lato, sans-serif;
    color: #2f84d0;
}
.logo svg {
    align-self: flex-start;
    margin-left: -1px;
}
.logo-text {
    font-size: 12.200px;
    line-height: 18px;
    margin: 16px 0 0 -5px;
    white-space: nowrap;
}
.rif {
    margin-left: 2px;
}
.vscroll {
    flex: 1;
    display: flex;
    flex-direction: column;
    padding: 1px 3px 0 2px;
    background-color: #e6e6e6;
}
.sb-btn {
    height: 13px;
    background-color: #fff;
    border: 1px solid #c6c6c6;
    display: flex;
    align-items: center;
    justify-content: center;
    flex-shrink: 0;
}
.sb-thumb {
    height: 331px;
    background-color: #fff;
    border: 1px solid #c6c6c6;
    flex-shrink: 0;
}
.sb-track {
    flex: 1;
    background-color: #dcdcdc;
}
.tri-up { border: 3px solid transparent; border-top: 0; border-bottom: 3px solid #666; }
.tri-down { border: 3px solid transparent; border-bottom: 0; border-top: 3px solid #666; }
.tri-left { border: 3px solid transparent; border-left: 0; border-right: 4px solid #666; }
.tri-right { border: 3px solid transparent; border-right: 0; border-left: 4px solid #666; }

/* sheet tabs */
.sheetbar {
    height: 28px;
    border-top: 1px solid #ababab;
    background-color: #e6e6e6;
    display: flex;
    align-items: center;
    flex-shrink: 0;
    font-size: 12.500px;
    color: #555;
}
.nav-arrow {
    width: 0;
    height: 0;
    border-top: 4px solid transparent;
    border-bottom: 4px solid transparent;
}
.nav-arrow.left {
    margin-left: 26px;
    border-right: 4px solid #c4c4c4;
}
.nav-arrow.right {
    margin-left: 25px;
    border-left: 4px solid #217346;
}
.stab {
    height: 17px;
    line-height: 17px;
    text-align: center;
    border-right: 1px solid #ababab;
    white-space: nowrap;
}
.stab.current {
    height: 24px;
    line-height: 22px;
    width: 111px;
    margin: -3px 0 0 41px;
    background-color: #fff;
    color: #217346;
    font-weight: 700;
    border-right: 0;
    border-bottom: 2px solid #217346;
}
.s-mat { width: 87px; padding-right: 3px; }
.s-equ { width: 72px; }
.s-man { width: 112px; padding-right: 2px; }
.s-p1 { width: 78px; padding-right: 3px; }
.s-p2 { width: 79px; padding-right: 3px; }
.s-p3 { width: 78px; padding-right: 3px; }
.s-pa { width: 36px; border-right: 0; text-align: left; padding-left: 12px; }
.more {
    width: 24px;
    color: #217346;
}
.d-sheet {
    width: 28px;
    margin-left: 6px;
    line-height: 20px;
}
.hscroll {
    width: 504px;
    margin-left: 3px;
    height: 15px;
    display: flex;
    background-color: #d6d6d6;
    border: 1px solid #ababab;
    border-left: 0;
}
.hs-btn {
    width: 14px;
    background-color: #fff;
    border: 0 solid #ababab;
    border-left-width: 1px;
    display: flex;
    align-items: center;
    justify-content: center;
    flex-shrink: 0;
}
.hs-track { width: 32px; }
.hs-thumb {
    flex: 1;
    background-color: #fff;
    border-left: 1px solid #ababab;
}

/* status bar */
.statusbar {
    height: 20px;
    background-color: #f1f1f1;
    border-top: 1px solid #d4d4d4;
    display: flex;
    align-items: center;
    flex: 1;
    font-size: 11px;
    color: #555;
}
.listo { margin-left: 7px; width: 43px; }
.macro { margin-right: 999px; }
.view {
    width: 37px;
    height: 19px;
    display: flex;
    align-items: center;
    justify-content: center;
}
.view.on { background-color: #c6c6c6; }
.zoom-minus {
    width: 6px;
    height: 2px;
    margin-left: 6px;
    background-color: #555;
}
.slider {
    width: 99px;
    height: 1px;
    margin-left: 4px;
    background-color: #999;
    position: relative;
}
.slider i {
    position: absolute;
    left: 48px;
    top: -5px;
    width: 4px;
    height: 11px;
    background-color: #666;
}
.zoom-plus {
    width: 8px;
    height: 8px;
    margin-left: 4px;
    background: linear-gradient(#555, #555) center / 8px 2px no-repeat,
                linear-gradient(#555, #555) center / 2px 8px no-repeat;
}
.zoom-val {
    margin-left: 15px;
    white-space: nowrap;
}
```
